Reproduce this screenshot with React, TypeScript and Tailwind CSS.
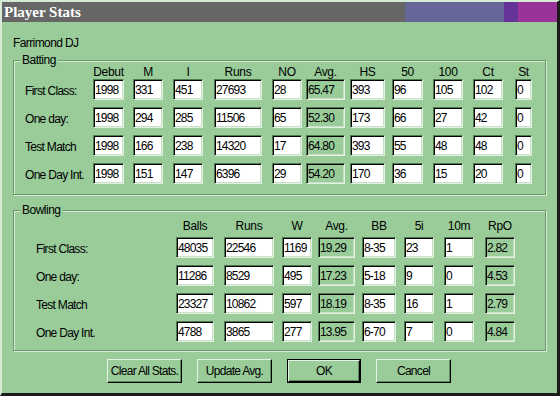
import React from "react";

// ─── Types / data ─────────────────────────────────────────────────────────────

type Col = { head: string; cls: string; ro?: boolean };

const BAT_COLS: Col[] = [
  { head: "Debut", cls: "w-[31px]" },
  { head: "M", cls: "w-[30px] ml-[9px]" },
  { head: "I", cls: "w-[30px] ml-[10px]" },
  { head: "Runs", cls: "w-[48px] ml-[11px]" },
  { head: "NO", cls: "w-[30px] ml-[10px]" },
  { head: "Avg.", cls: "w-[39px] ml-[4px]", ro: true },
  { head: "HS", cls: "w-[35px] ml-[5px]" },
  { head: "50", cls: "w-[31px] ml-[7px]" },
  { head: "100", cls: "w-[30px] ml-[10px]" },
  { head: "Ct", cls: "w-[30px] ml-[10px]" },
  { head: "St", cls: "w-[17px] ml-[12px]" },
];

const BAT_ROWS: { label: string; vals: string[] }[] = [
  { label: "First Class:", vals: ["1998", "331", "451", "27693", "28", "65.47", "393", "96", "105", "102", "0"] },
  { label: "One day:", vals: ["1998", "294", "285", "11506", "65", "52.30", "173", "66", "27", "42", "0"] },
  { label: "Test Match", vals: ["1998", "166", "238", "14320", "17", "64.80", "393", "55", "48", "48", "0"] },
  { label: "One Day Int.", vals: ["1998", "151", "147", "6396", "29", "54.20", "170", "36", "15", "20", "0"] },
];

const BOWL_COLS: Col[] = [
  { head: "Balls", cls: "w-[38px]" },
  { head: "Runs", cls: "w-[50px] ml-[10px]" },
  { head: "W", cls: "w-[30px] ml-[8px]" },
  { head: "Avg.", cls: "w-[37px] ml-[6px]", ro: true },
  { head: "BB", cls: "w-[34px] ml-[7px]" },
  { head: "5i", cls: "w-[30px] ml-[8px]" },
  { head: "10m", cls: "w-[30px] ml-[10px]" },
  { head: "RpO", cls: "w-[30px] ml-[11px]", ro: true },
];

const BOWL_ROWS: { label: string; vals: string[] }[] = [
  { label: "First Class:", vals: ["48035", "22546", "1169", "19.29", "8-35", "23", "1", "2.82"] },
  { label: "One day:", vals: ["11286", "8529", "495", "17.23", "5-18", "9", "0", "4.53"] },
  { label: "Test Match", vals: ["23327", "10862", "597", "18.19", "8-35", "16", "1", "2.79"] },
  { label: "One Day Int.", vals: ["4788", "3865", "277", "13.95", "6-70", "7", "0", "4.84"] },
];

// ─── Bits ─────────────────────────────────────────────────────────────────────

function Field({ value, cls, ro }: { value: string; cls: string; ro?: boolean }) {
  return (
    <input
      readOnly
      value={value}
      className={[
        "shrink-0 h-[21px] border border-t-[#4f7a4f] border-l-[#4f7a4f] border-r-[#e2f1e2] border-b-[#e2f1e2] shadow-[inset_1px_1px_0_#000,inset_-1px_-1px_0_#c6e0c6] pl-[1px] text-[12px] tracking-[-0.8px] text-black outline-none",
        cls,
        ro ? "bg-[#99cc99]" : "bg-white",
      ].join(" ")}
    />
  );
}

function GroupBox({ title, className, children }: { title: string; className: string; children: React.ReactNode }) {
  return (
    <div className={["relative ml-[11px] w-[533px] border border-[#6a986a] shadow-[inset_1px_1px_0_#d6ebd6,1px_1px_0_#d6ebd6]", className].join(" ")}>
      <span className="absolute left-[6px] -top-[8px] bg-[#99cc99] px-[2px] text-[12px] leading-[14px] tracking-[-0.5px]">
        {title}
      </span>
      {children}
    </div>
  );
}

function Grid({ cols, rows, labelCls }: { cols: Col[]; rows: { label: string; vals: string[] }[]; labelCls: string }) {
  return (
    <>
      <div className="flex h-[13px] items-center text-[12px] leading-[13px] tracking-[-0.3px]">
        <div className={labelCls} />
        {cols.map((c) => (
          <div key={c.head + c.cls} className={["shrink-0 text-center", c.cls].join(" ")}>
            {c.head}
          </div>
        ))}
      </div>
      <div className="flex flex-col gap-[7px]">
        {rows.map((r) => (
          <div key={r.label} className="flex items-center">
            <div className={["pt-[3px] text-[12px] tracking-[-0.7px]", labelCls].join(" ")}>{r.label}</div>
            {r.vals.map((v, i) => (
              <Field key={i} value={v} cls={cols[i].cls} ro={cols[i].ro} />
            ))}
          </div>
        ))}
      </div>
    </>
  );
}

function Btn({ children, isDefault }: { children: React.ReactNode; isDefault?: boolean }) {
  const face =
    "flex h-full w-full items-center justify-center border border-t-[#e4f2e4] border-l-[#e4f2e4] border-r-black border-b-black bg-[#99cc99] shadow-[inset_-1px_-1px_0_#5f8f5f] text-[12px] tracking-[-0.7px]";
  if (isDefault) {
    return (
      <div className="h-[24px] w-[74px] border border-black">
        <button className={face}>{children}</button>
      </div>
    );
  }
  return (
    <div className="h-[24px] w-[75px]">
      <button className={face}>{children}</button>
    </div>
  );
}

// ─── Page ─────────────────────────────────────────────────────────────────────

export default function App() {
  return (
    <div className="h-[396px] w-[560px] overflow-hidden border-l-2 border-t-2 border-r-[3px] border-b-[3px] border-l-[#d6ebd6] border-t-[#d6ebd6] border-r-[#1c1c1c] border-b-[#1c1c1c] bg-[#99cc99] font-['Liberation_Sans',Arial,sans-serif] text-black">
      {/* Title bar */}
      <div className="flex h-[20px] items-center">
        <div className="flex h-full w-[403px] items-center bg-[#666666] pl-[2px]">
          <span className="font-['Liberation_Serif',serif] text-[15px] font-bold text-white">Player Stats</span>
        </div>
        <div className="h-full w-[99px] bg-[#666699]" />
        <div className="h-full w-[14px] bg-[#663399]" />
        <div className="h-full flex-1 bg-[#993399]" />
      </div>

      <div className="mt-[15px] ml-[11px] h-[13px] text-[12px] leading-[13px] tracking-[-0.6px]">Farrimond DJ</div>

      {/* Batting */}
      <GroupBox title="Batting" className="mt-[10px] h-[135px] pt-[5px]">
        <Grid cols={BAT_COLS} rows={BAT_ROWS} labelCls="w-[79px] shrink-0 pl-[11px]" />
      </GroupBox>

      {/* Bowling */}
      <GroupBox title="Bowling" className="mt-[15px] h-[141px] pt-[9px]">
        <div className="flex flex-col gap-[4px]">
          <Grid cols={BOWL_COLS} rows={BOWL_ROWS} labelCls="w-[162px] shrink-0 pl-[22px]" />
        </div>
      </GroupBox>

      {/* Buttons */}
      <div className="mt-[8px] flex justify-center gap-[15px] pr-[1px]">
        <Btn>Clear All Stats.</Btn>
        <Btn>Update Avg.</Btn>
        <Btn isDefault>OK</Btn>
        <Btn>Cancel</Btn>
      </div>
    </div>
  );
}
